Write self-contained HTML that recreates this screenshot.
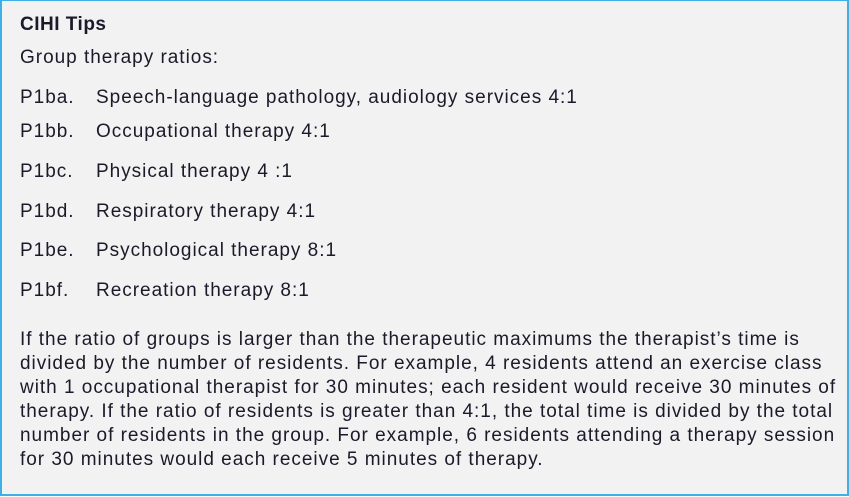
<!DOCTYPE html>
<html><head><style>
body{margin:0;width:849px;height:497px;background:#fff;overflow:hidden}
.box{position:absolute;left:0;top:0;width:845px;height:493px;background:#f2f2f2;border:2px solid #3fb0e6;border-top-width:1px;}
.t{position:absolute;font-family:"Liberation Sans",Arial,sans-serif;font-size:19px;letter-spacing:0.98px;color:#1a1a2a;white-space:nowrap;line-height:20px}
.b{font-weight:bold;letter-spacing:0.5px}
</style></head><body>
<div class="box"></div>
<div class="t b" style="left:20px;top:15px">CIHI Tips</div>
<div class="t" style="left:20px;top:48px">Group therapy ratios:</div>
<div class="t" style="left:20px;top:88px">P1ba.</div><div class="t" style="left:96px;top:88px">Speech-language pathology, audiology services 4:1</div>
<div class="t" style="left:20px;top:122px">P1bb.</div><div class="t" style="left:96px;top:122px">Occupational therapy 4:1</div>
<div class="t" style="left:20px;top:162px">P1bc.</div><div class="t" style="left:96px;top:162px">Physical therapy 4 :1</div>
<div class="t" style="left:20px;top:202px">P1bd.</div><div class="t" style="left:96px;top:202px">Respiratory therapy 4:1</div>
<div class="t" style="left:20px;top:241px">P1be.</div><div class="t" style="left:96px;top:241px">Psychological therapy 8:1</div>
<div class="t" style="left:20px;top:281px">P1bf.</div><div class="t" style="left:96px;top:281px">Recreation therapy 8:1</div>
<div class="t" style="left:20px;top:330px">If the ratio of groups is larger than the therapeutic maximums the therapist’s time is</div>
<div class="t" style="left:20px;top:354px">divided by the number of residents. For example, 4 residents attend an exercise class</div>
<div class="t" style="left:20px;top:378px">with 1 occupational therapist for 30 minutes; each resident would receive 30 minutes of</div>
<div class="t" style="left:20px;top:402px">therapy. If the ratio of residents is greater than 4:1, the total time is divided by the total</div>
<div class="t" style="left:20px;top:426px">number of residents in the group. For example, 6 residents attending a therapy session</div>
<div class="t" style="left:20px;top:450px">for 30 minutes would each receive 5 minutes of therapy.</div>
</body></html>
